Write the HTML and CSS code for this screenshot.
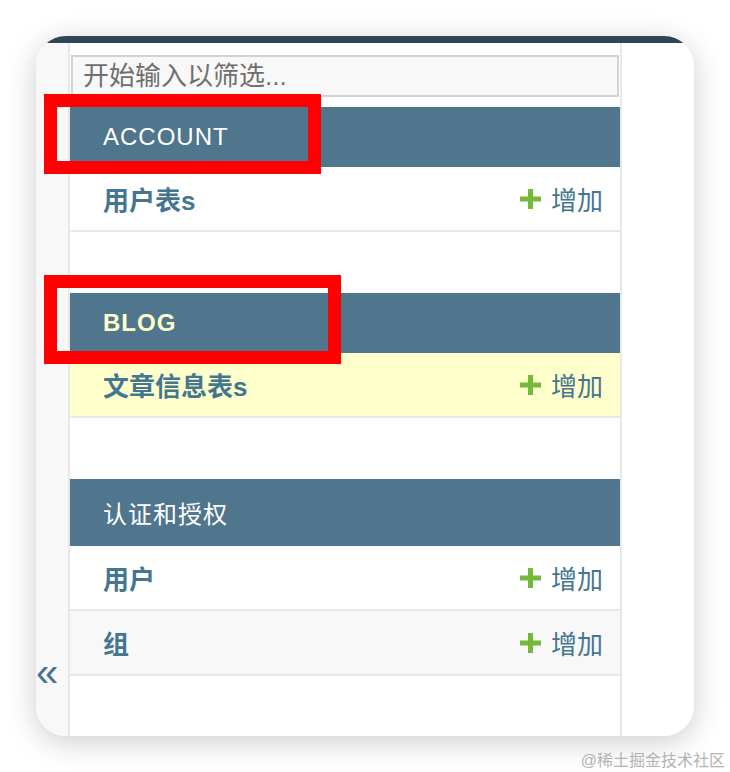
FILE: index.html
```html
<!DOCTYPE html>
<html lang="zh-CN">
<head>
  <meta charset="UTF-8" />
  <title>站点管理</title>
  <link rel="stylesheet" href="styles.css">
</head>
<body>

  <div class="shot">
    <div class="window">
      <div class="header-edge"></div>
      <div class="main">
        <button class="toggle-nav" type="button">«</button>

        <!-- Nav sidebar -->
        <nav class="nav-sidebar">
          <input class="nav-filter" type="search" placeholder="开始输入以筛选..." />

          <div class="module">
            <div class="caption"><a href="#" class="section">Account</a></div>
            <div class="row">
              <a href="#" class="model">用户表s</a>
              <a href="#" class="addlink">
                <svg width="21" height="20" viewBox="0 0 21 20"><path d="M8 0h5v7.5h8v5h-8V20H8v-7.5H0v-5h8z"/></svg>
                增加
              </a>
            </div>
          </div>

          <div class="module current-app">
            <div class="caption"><a href="#" class="section">Blog</a></div>
            <div class="row current-model">
              <a href="#" class="model">文章信息表s</a>
              <a href="#" class="addlink">
                <svg width="21" height="20" viewBox="0 0 21 20"><path d="M8 0h5v7.5h8v5h-8V20H8v-7.5H0v-5h8z"/></svg>
                增加
              </a>
            </div>
          </div>

          <div class="module">
            <div class="caption"><a href="#" class="section">认证和授权</a></div>
            <div class="row">
              <a href="#" class="model">用户</a>
              <a href="#" class="addlink">
                <svg width="21" height="20" viewBox="0 0 21 20"><path d="M8 0h5v7.5h8v5h-8V20H8v-7.5H0v-5h8z"/></svg>
                增加
              </a>
            </div>
            <div class="row">
              <a href="#" class="model">组</a>
              <a href="#" class="addlink">
                <svg width="21" height="20" viewBox="0 0 21 20"><path d="M8 0h5v7.5h8v5h-8V20H8v-7.5H0v-5h8z"/></svg>
                增加
              </a>
            </div>
          </div>
        </nav>

        <div class="content"></div>
      </div>
    </div>

    <!-- annotation boxes -->
    <div class="mark mark-account"></div>
    <div class="mark mark-blog"></div>
    <div class="watermark">@稀土掘金技术社区</div>
  </div>

</body>
</html>
```

FILE: styles.css
```css
body {
  margin: 0;
  background-color: #fff;
  font-family: "Liberation Sans", "Noto Sans CJK SC", sans-serif;
}
.shot {
  position: relative;
  width: 730px;
  height: 772px;
  padding: 36px;
  box-sizing: border-box;
}
.window {
  width: 658px;
  height: 700px;
  border-radius: 30px;
  overflow: hidden;
  background-color: #fff;
  box-shadow: 0 6px 30px rgba(0, 0, 0, 0.2);
  display: flex;
  flex-direction: column;
}
.header-edge {
  flex: none;
  height: 7px;
  background-color: #2d4756;
}
.main {
  flex: 1;
  display: flex;
}
.toggle-nav {
  flex: none;
  width: 34px;
  box-sizing: border-box;
  border: none;
  border-right: 2px solid #e8e8e8;
  background-color: #f8f8f8;
  color: #447494;
  font-family: "Liberation Sans", sans-serif;
  font-size: 40px;
  padding: 0 0 42px 0;
  display: flex;
  align-items: flex-end;
  justify-content: flex-start;
}
.nav-sidebar {
  flex: none;
  width: 552px;
  box-sizing: border-box;
  border-right: 2px solid #e8e8e8;
}
.nav-filter {
  display: block;
  width: 548px;
  height: 42px;
  margin: 12px 1px 10px;
  box-sizing: border-box;
  border: 2px solid #d3d3d3;
  background-color: #f8f8f8;
  padding: 0 10px;
  font-family: inherit;
  font-size: 26px;
  color: #333;
}
.nav-filter::placeholder {
  color: #6f6f6f;
}
.module {
  margin-bottom: 61px;
}
.caption {
  background-color: #4f768c;
  padding: 16px 33px;
  font-size: 24px;
  letter-spacing: 1px;
  text-transform: uppercase;
}
.caption a {
  color: #fff;
  text-decoration: none;
}
.current-app .caption a {
  color: #ffc;
  font-weight: bold;
}
.row {
  display: flex;
  justify-content: space-between;
  align-items: center;
  padding: 13px 17px 13px 33px;
  border-bottom: 2px solid #e8e8e8;
  font-size: 26px;
}
.row:nth-child(odd) {
  background-color: #f8f8f8;
}
.row.current-model {
  background-color: #ffc;
}
.row a {
  color: #45768f;
  text-decoration: none;
}
.model {
  font-weight: bold;
}
.addlink {
  display: flex;
  align-items: center;
  gap: 10px;
}
.addlink svg {
  fill: #76b83a;
}
.mark {
  position: absolute;
  box-sizing: border-box;
  border: 13px solid #f00;
}
.mark-account {
  left: 44px;
  top: 94px;
  width: 277px;
  height: 80px;
}
.mark-blog {
  left: 44px;
  top: 275px;
  width: 297px;
  height: 89px;
}
.watermark {
  position: absolute;
  right: 5px;
  top: 747px;
  font-size: 16px;
  color: #b3b3b3;
}
```
